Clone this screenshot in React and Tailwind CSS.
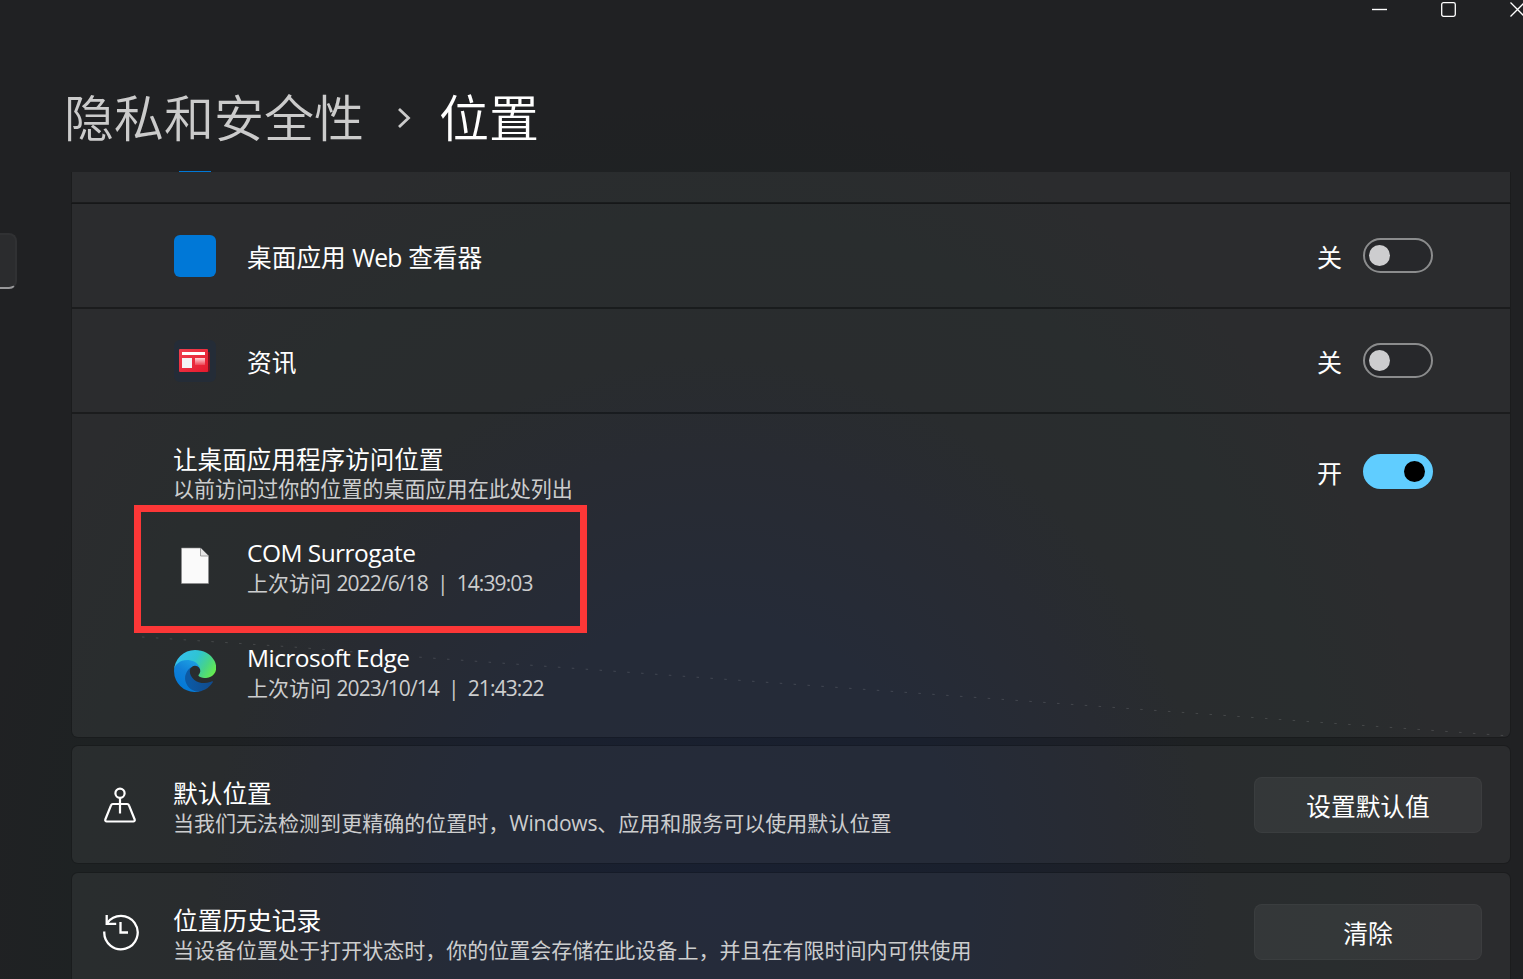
import clsx from "clsx";

const desktopApps = [
  { name: "COM Surrogate", date: "2022/6/18", time: "14:39:03", icon: <FileIcon /> },
  { name: "Microsoft Edge", date: "2023/10/14", time: "21:43:22", icon: <EdgeIcon /> }
];

function WindowControls() {
  return (
    <div className="flex h-[19px] justify-end gap-[54px] overflow-hidden pt-0.5 text-white">
      <svg className="-ml-px h-4 w-4 shrink-0" viewBox="0 0 16 16" fill="none" stroke="currentColor">
        <path d="M0 7.5h15" strokeWidth="1.4" />
      </svg>
      <svg className="-ml-px h-4 w-4 shrink-0" viewBox="0 0 16 16" fill="none" stroke="currentColor">
        <rect x="0.7" y="0.7" width="13.6" height="13.6" rx="1.8" strokeWidth="1.3" />
      </svg>
      <svg className="-mr-[3px] -ml-px h-4 w-4 shrink-0" viewBox="0 0 16 16" fill="none" stroke="currentColor">
        <path d="M0.5 0.5l14 14M14.5 0.5l-14 14" strokeWidth="1.3" />
      </svg>
    </div>
  );
}

function NewsIcon() {
  return (
    <svg className="h-[42px] w-[42px]" viewBox="0 0 42 42">
      <defs>
        <linearGradient id="news" x1="0" y1="0" x2="1" y2="1">
          <stop offset="0" stopColor="#f0404f" />
          <stop offset="1" stopColor="#e5192d" />
        </linearGradient>
        <linearGradient id="newsBlock" x1="0" y1="0" x2="0" y2="1">
          <stop offset="0" stopColor="#ffd5d8" />
          <stop offset="1" stopColor="#ee4453" />
        </linearGradient>
      </defs>
      <rect width="42" height="42" rx="6" fill="#242c37" />
      <path d="M33 12h2a1 1 0 0 1 1 1v17a2 2 0 0 1-2 2h-3z" fill="#7d1420" />
      <rect x="5" y="9" width="29" height="23" rx="1" fill="url(#news)" />
      <rect x="8" y="12" width="23" height="3" fill="#fff" />
      <rect x="8" y="18" width="10" height="10" fill="#f3f3f5" />
      <rect x="21" y="18" width="10" height="7" fill="url(#newsBlock)" />
    </svg>
  );
}

function FileIcon() {
  return (
    <svg className="h-[42px] w-[42px]" viewBox="0 0 42 42">
      <path d="M7.5 3h19l8 8v27.5h-27z" fill="#fafafa" stroke="#8b8b8b" strokeWidth="0.6" />
      <path d="M26.5 3v8h8" fill="#e6e6e6" stroke="#8b8b8b" strokeWidth="0.8" />
    </svg>
  );
}

function EdgeIcon() {
  return (
    <svg className="h-[42px] w-[42px]" viewBox="0 0 256 256">
      <defs>
        <linearGradient id="edgeDark" x1="0.2" y1="0.5" x2="1" y2="0.5">
          <stop offset="0" stopColor="#0c59a4" />
          <stop offset="1" stopColor="#114a8b" />
        </linearGradient>
        <linearGradient id="edgeBlue" x1="0.7" y1="0.1" x2="0.3" y2="1">
          <stop offset="0" stopColor="#1b9de2" />
          <stop offset="0.4" stopColor="#1180d8" />
          <stop offset="1" stopColor="#0078d7" />
        </linearGradient>
        <linearGradient id="edgeGreen" x1="0" y1="0.3" x2="1" y2="0.7">
          <stop offset="0" stopColor="#35c1f1" />
          <stop offset="0.45" stopColor="#2fc4d2" />
          <stop offset="0.75" stopColor="#48d487" />
          <stop offset="1" stopColor="#66eb4f" />
        </linearGradient>
      </defs>
      <path
        fill="url(#edgeDark)"
        d="M231 190.5c-3.4 1.8-6.9 3.4-10.5 4.7a101.5 101.5 0 0 1-35.9 6.5c-47.3 0-88.5-32.5-88.5-74.3A31.5 31.5 0 0 1 112.5 100c-42.8 1.8-53.8 46.4-53.8 72.5 0 74 68.1 81.4 82.8 81.4 7.9 0 19.8-2.3 27-4.6l1.3-.4a128.3 128.3 0 0 0 66.6-52.8 4 4 0 0 0-5.4-5.6z"
      />
      <path
        fill="url(#edgeBlue)"
        d="M105.7 241.4A79.2 79.2 0 0 1 83 220a80.7 80.7 0 0 1 29.5-120c3.2-1.5 8.5-4.2 15.6-4.1a32.4 32.4 0 0 1 25.7 13 31.9 31.9 0 0 1 6.3 18.7c0-.2 24.5-79.6-80-79.6-43.9 0-80 41.6-80 78.2a130.2 130.2 0 0 0 12.1 56 128 128 0 0 0 156.4 67 75.5 75.5 0 0 1-62.8-7.8z"
      />
      <path
        fill="url(#edgeGreen)"
        d="M152.3 148.9c-.9 1-3.4 2.5-3.4 5.6 0 2.6 1.7 5.2 4.8 7.3 14.5 10.1 41.9 8.8 42 8.8a60.2 60.2 0 0 0 30.6-8.5 62 62 0 0 0 30.7-53.4c.3-22.6-8-37.6-11.4-44.2C224.3 23 179 0 128 0A128 128 0 0 0 0 126.2c.5-36.6 36.8-66 80-66 3.5 0 23.5.3 42 10 16.4 8.6 25 18.9 30.9 29.2 6.2 10.6 7.3 24 7.3 29.3 0 5.3-2.7 13.3-7.9 20.2z"
      />
    </svg>
  );
}

function DefaultLocationIcon() {
  return (
    <svg className="mt-[3px] h-10 w-10" viewBox="0 0 40 40" fill="none" stroke="#fff" strokeWidth="2.2" strokeLinejoin="round">
      <circle cx="20" cy="7.3" r="4.6" />
      <path d="M20 12v15.5" />
      <path d="M20 18h-7.1a2 2 0 0 0-1.9 1.3L5.3 33.5a1.5 1.5 0 0 0 1.4 2h26.6a1.5 1.5 0 0 0 1.4-2L29 19.3a2 2 0 0 0-1.9-1.3H20" />
    </svg>
  );
}

function HistoryIcon() {
  return (
    <svg className="h-10 w-10" viewBox="0 0 40 40" fill="none" stroke="#fff" strokeWidth="2.3">
      <path d="M4.3 19.5a16.7 16.7 0 1 0 3-8.5" />
      <path d="M6.7 3v8.8h9.5" />
      <path d="M20.5 10v10.5H28" />
    </svg>
  );
}

function Toggle({ on }) {
  return (
    <div className="flex items-center gap-[21px]">
      <span className="pt-0.5 text-[25px] leading-[30px] text-white">{on ? "开" : "关"}</span>
      <button
        type="button"
        role="switch"
        aria-checked={on}
        className={clsx(
          "flex h-[35px] w-[70px] items-center rounded-full",
          on
            ? "justify-end bg-[#60cdff] pr-2"
            : "border-2 border-[#8b8c8d] bg-[#27282b] pl-1"
        )}
      >
        <span className={clsx("h-[21px] w-[21px] rounded-full", on ? "bg-black" : "bg-[#cdcdcf]")} />
      </button>
    </div>
  );
}

function AppRow({ icon, children }) {
  return (
    <div className="flex h-[103px] items-center bg-white/5 pr-[77px] pl-[102px] shadow-[0_0_0_1px_rgba(0,0,0,0.15)]">
      {icon}
      <p className="ml-[31px] flex-1 pt-[5px] text-[24.7px] leading-[30px] text-white">{children}</p>
      <Toggle on={false} />
    </div>
  );
}

function SettingCard({ icon, title, action, className, children }) {
  return (
    <section
      className={clsx(
        "flex h-[117px] items-center rounded-md bg-white/5 pr-7 pl-7 shadow-[0_0_0_1px_rgba(0,0,0,0.15)]",
        className
      )}
    >
      {icon}
      <div className="ml-[33px] flex-1 pt-2">
        <h2 className="text-[24.7px] leading-[30px] text-white">{title}</h2>
        <p className="text-[21.03px] leading-[29px] whitespace-nowrap text-[#cccdce]">{children}</p>
      </div>
      <button
        type="button"
        className="h-14 w-[228px] rounded-lg border border-white/[0.03] bg-white/[0.055] pt-1 text-[24.7px] leading-[30px] text-white"
      >
        {action}
      </button>
    </section>
  );
}

export default function App() {
  return (
    <div className="flex h-[979px] w-[1523px] overflow-hidden bg-[#202022] bg-[radial-gradient(ellipse_740px_800px_at_710px_900px,#192031_0%,#1a202d_35%,#1d2027_56%,#1e2123_68%,#1e2223_85%,#202123_100%)] font-['Open_Sans','Noto_Sans_CJK_SC',sans-serif]">
      <aside className="w-[17px] shrink-0 pt-[233px]">
        <div className="h-14 rounded-r-lg border-y-2 border-r-2 border-t-[#303133] border-r-[#303133] border-b-[#98989a] bg-[#2b2c2e]" />
      </aside>

      <main className="min-w-0 flex-1">
        <WindowControls />

        <h1 className="ml-[47px] flex h-[152px] items-center pt-[46px] text-[50px] leading-[60px] font-[350]">
          <span className="text-[#cbcbcb]">隐私和安全性</span>
          <svg className="mr-[26px] ml-[33px] h-6 w-4" viewBox="0 0 16 24" fill="none" stroke="#cbcbcb" strokeWidth="2.8">
            <path d="M2 3l9.500 9-9.500 9" />
          </svg>
          <span className="text-white">位置</span>
        </h1>

        <div className="mr-[13px] ml-[55px]">
          <div className="relative">
            <div className="ml-[107px] h-px w-8 bg-[#0078d7]" />
            <div className="flex flex-col gap-0.5">
              <div className="h-[30px] bg-white/5 shadow-[0_1px_0_1px_rgba(0,0,0,0.15)]" />
              <AppRow icon={<span className="h-[42px] w-[42px] rounded-md bg-[#0078d7]" />}>
                桌面应用 <span className="tracking-[-0.03em]">Web</span> 查看器
              </AppRow>
              <AppRow icon={<NewsIcon />}>资讯</AppRow>

              <section className="h-[323px] rounded-b-md bg-white/5 pt-[31px] pr-[77px] pl-[102px] shadow-[0_0_0_1px_rgba(0,0,0,0.15)]">
                <div className="flex justify-between">
                  <div>
                    <h2 className="-ml-px text-[24.6px] leading-[30px] text-white">让桌面应用程序访问位置</h2>
                    <p className="-ml-px text-[21.05px] leading-[28px] text-[#cccdce]">
                      以前访问过你的位置的桌面应用在此处列出
                    </p>
                  </div>
                  <div className="pt-[9px]">
                    <Toggle on />
                  </div>
                </div>

                <ul className="mt-[35px] flex flex-col gap-[45px]">
                  {desktopApps.map((app) => (
                    <li key={app.name} className="flex items-start gap-[31px]">
                      <span className="pt-[7px]">{app.icon}</span>
                      <div>
                        <p className="text-[24.5px] leading-[30px] tracking-[-0.022em] text-white">{app.name}</p>
                        <p className="text-[21px] leading-[30px] text-[#cccdce]">
                          上次访问{" "}
                          <span className="tracking-[-0.043em]">
                            {app.date} &nbsp;|&nbsp; {app.time}
                          </span>
                        </p>
                      </div>
                    </li>
                  ))}
                </ul>
              </section>
            </div>

            {/* faint dashed arc across the desktop apps section */}
            <svg className="pointer-events-none absolute top-0 left-0 h-[567px] w-[1438px]" fill="none">
              <path
                d="M70 466L221 476L345 486L525 499L1215 549L1438 565"
                stroke="#fff"
                strokeOpacity="0.13"
                strokeDasharray="2.5 11.4"
              />
            </svg>
            <div className="pointer-events-none absolute top-[334px] left-[62px] h-32 w-[453px] border-[7px] border-[#fc3737]" />
          </div>

          <SettingCard className="mt-[9px]" icon={<DefaultLocationIcon />} title="默认位置" action="设置默认值">
            当我们无法检测到更精确的位置时，<span className="tracking-[-0.01em]">Windows</span>
            、应用和服务可以使用默认位置
          </SettingCard>
          <SettingCard className="mt-2.5" icon={<HistoryIcon />} title="位置历史记录" action="清除">
            当设备位置处于打开状态时，你的位置会存储在此设备上，并且在有限时间内可供使用
          </SettingCard>
        </div>
      </main>
    </div>
  );
}
